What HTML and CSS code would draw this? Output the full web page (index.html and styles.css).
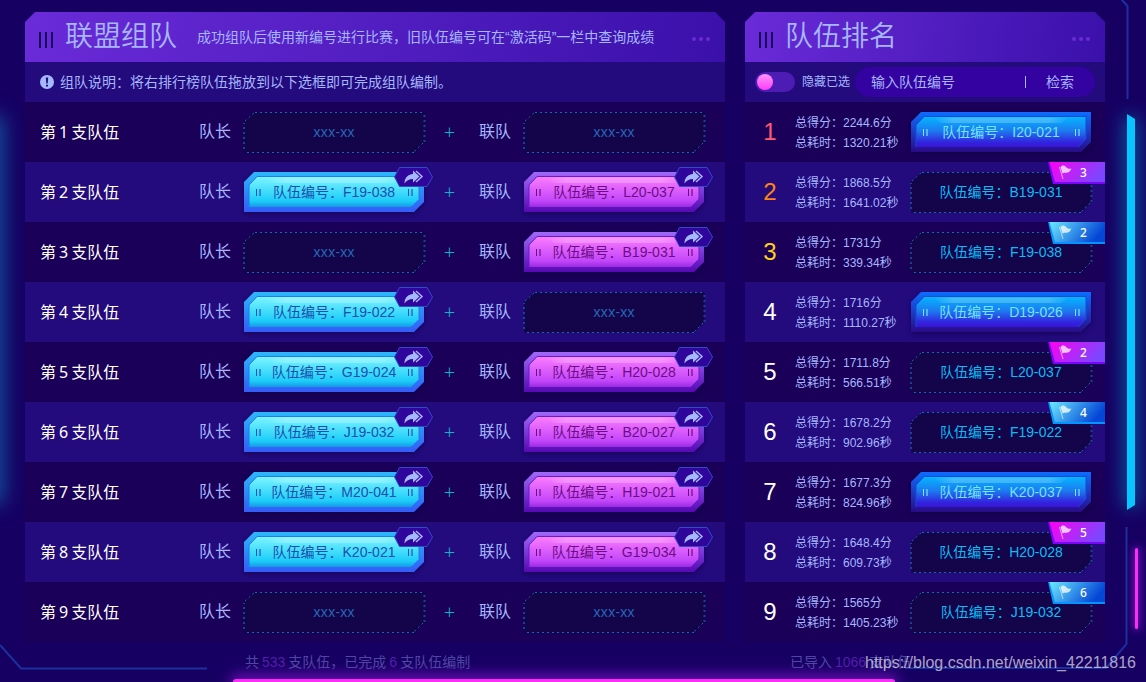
FILE: index.html
```html
<!DOCTYPE html>
<html lang="zh-CN">
<head>
<meta charset="utf-8">
<title>联盟组队</title>
<link rel="stylesheet" href="styles.css">
</head>
<body>
<svg class="defs" aria-hidden="true">
  <defs>
    <linearGradient id="cyanEdge" x1="0" y1="0" x2="0" y2="1"><stop offset="0" stop-color="#2cb8fb"/><stop offset="1" stop-color="#335bf8"/></linearGradient>
    <linearGradient id="cyanFace" x1="0" y1="0" x2="0" y2="1"><stop offset="0" stop-color="#7bf4ff"/><stop offset=".8" stop-color="#1ccdf8"/><stop offset="1" stop-color="#1797e6"/></linearGradient>
    <linearGradient id="pinkEdge" x1="0" y1="0" x2="0" y2="1"><stop offset="0" stop-color="#a069fa"/><stop offset="1" stop-color="#5608b4"/></linearGradient>
    <linearGradient id="pinkFace" x1="0" y1="0" x2="0" y2="1"><stop offset="0" stop-color="#fb7bfd"/><stop offset=".8" stop-color="#c246fa"/><stop offset="1" stop-color="#9a2ae0"/></linearGradient>
    <linearGradient id="blueEdge" x1="0" y1="0" x2="0" y2="1"><stop offset="0" stop-color="#0d6cff"/><stop offset="1" stop-color="#2a0a88"/></linearGradient>
    <linearGradient id="blueFace" x1="0" y1="0" x2="0" y2="1"><stop offset="0" stop-color="#04b4ff"/><stop offset=".45" stop-color="#1c7cf0"/><stop offset=".85" stop-color="#3322de"/><stop offset="1" stop-color="#3a14d8"/></linearGradient>
    <linearGradient id="shine" x1="0" y1="0" x2="1" y2="0"><stop offset="0" stop-color="#fff" stop-opacity="0"/><stop offset=".15" stop-color="#fff" stop-opacity=".22"/><stop offset=".85" stop-color="#fff" stop-opacity=".22"/><stop offset="1" stop-color="#fff" stop-opacity="0"/></linearGradient>
    <linearGradient id="badgePink" x1="0" y1="0" x2="1" y2=".3"><stop offset="0" stop-color="#ff00f0"/><stop offset="1" stop-color="#7d45ff"/></linearGradient>
    <linearGradient id="badgeBlue" x1="0" y1="0" x2="1" y2=".3"><stop offset="0" stop-color="#6ceaff"/><stop offset="1" stop-color="#0446d6"/></linearGradient>
  </defs>
  <symbol id="grips" viewBox="0 0 180 40">
    <path d="M12 17h1v7h-1zM164 17h1v7h-1z"/>
    <path d="M15 17h2v7h-2zM167 17h2v7h-2z" opacity=".6"/>
  </symbol>
  <symbol id="slotEmpty" viewBox="0 0 180 40" overflow="visible">
    <path d="M10 .5H180.500V30L170 40.500H0V10z" fill="#14044a"/>
    <path d="M11 .5H180M170 40.500H0" fill="none" stroke="#0b6ea6" stroke-dasharray="2 3"/>
    <path d="M0 37V11M180.500 3V30" fill="none" stroke="#124886" stroke-width="2" stroke-dasharray="2 3"/>
    <path d="M1 9L10 1M179 31L170 40" fill="none" stroke="#0d6fa4" stroke-dasharray="2 3"/>
  </symbol>
  <symbol id="slotCyan" viewBox="0 0 180 40">
    <path d="M10 0H180V30L170 40H0V10z" fill="url(#cyanEdge)"/>
    <path d="M13 5H175V27L167 35H5V13z" fill="url(#cyanFace)"/>
    <path d="M5 35V13L13 4.500H175V27" fill="none" stroke="#1d7fe8"/>
    <path d="M22 5.500H158L150 11H30z" fill="url(#shine)"/>
    <use href="#grips" width="180" height="40" fill="#1a53b4"/>
  </symbol>
  <symbol id="slotPink" viewBox="0 0 180 40">
    <path d="M10 0H180V30L170 40H0V10z" fill="url(#pinkEdge)"/>
    <path d="M13 5H175V27L167 35H5V13z" fill="url(#pinkFace)"/>
    <path d="M5 35V13L13 4.500H175V27L167 35" fill="none" stroke="#6420c8"/>
    <path d="M22 5.500H158L150 11H30z" fill="url(#shine)"/>
    <use href="#grips" width="180" height="40" fill="#6d0c86"/>
  </symbol>
  <symbol id="slotBlue" viewBox="0 0 180 40">
    <path d="M10 0H180V30L170 40H0V10z" fill="url(#blueEdge)"/>
    <path d="M13 5H175V27L167 35H5V13z" fill="url(#blueFace)"/>
    <path d="M5 35V13L13 4.500H175V27L167 35" fill="none" stroke="#0f4ed0"/>
    <path d="M22 5.500H158L150 11H30z" fill="url(#shine)"/>
    <use href="#grips" width="180" height="40" fill="#74e4ff"/>
  </symbol>
  <symbol id="share" viewBox="0 0 39 20">
    <path d="M5.500 .5H33L38.500 10L33 19.500H5.500L.5 10z" fill="#2f059c" stroke="#2f4cc4"/>
    <path d="M10.500 16.500C10.500 11 13.500 7.500 19 7V3.500L25.500 9.500L19 15.500V12C15 12 12.500 13.500 10.500 16.500z" fill="#a5b8ff"/>
    <path d="M22 4L28 9.500L22 15" fill="none" stroke="#a5b8ff" stroke-width="1.500"/>
  </symbol>
  <symbol id="flag" viewBox="0 0 13 14">
    <path d="M.5 2L4 14" stroke="#fff" stroke-opacity=".6" fill="none"/>
    <path d="M1.500 2C4 -.5 6 .5 7.500 2.500C9 4 11 4 12.500 3.500C11.500 5 11 7 8.500 7.500C6.500 8 5 7 3.500 8.500z" fill="#fff" fill-opacity=".75"/>
  </symbol>
  <symbol id="tagPink" viewBox="0 0 57 22">
    <path d="M0 0H57V22H5z" fill="#7a05ff"/><path d="M1.500 0H57V20H7z" fill="url(#badgePink)"/><use href="#flag" x="11" y="3" width="13" height="14"/>
  </symbol>
  <symbol id="tagBlue" viewBox="0 0 57 22">
    <path d="M0 0H57V22H5z" fill="#0494ff"/><path d="M1.500 0H57V20H7z" fill="url(#badgeBlue)"/><use href="#flag" x="11" y="3" width="13" height="14"/>
  </symbol>
</svg>

<div class="glow glow-left"></div>
<div class="glow glow-right"></div>
<div class="bar bar-right"></div>
<div class="bar bar-bottom"></div>
<svg class="frame frame-top" viewBox="0 0 12 100" aria-hidden="true"><path d="M1 -1L7.500 6V99"/></svg>
<svg class="frame frame-right" viewBox="0 0 224 144" aria-hidden="true"><path d="M0 141H201L221.500 117V0"/></svg>
<svg class="frame frame-left" viewBox="0 0 207 26" aria-hidden="true"><path d="M0 1L21 24.500H207"/></svg>

<main class="page">
  <section class="panel">
    <header class="panel-head">
      <span class="ticks"></span>
      <h1>联盟组队</h1>
      <p>成功组队后使用新编号进行比赛，旧队伍编号可在“激活码”一栏中查询成绩</p>
      <span class="dots"><i></i><i></i><i></i></span>
    </header>
    <div class="panel-bar">
      <svg class="info" viewBox="0 0 14 14" aria-hidden="true"><circle cx="7" cy="7" r="7" fill="#a5b8ff"/><path d="M5.800 2.500H8.200L7.700 8.500H6.300zM6 9.800H8V11.500H6z" fill="#230a7d"/></svg>
      <span>组队说明：将右排行榜队伍拖放到以下选框即可完成组队编制。</span>
    </div>
    <ol class="rows teams">
      <li>
        <b class="name">第<i>1</i>支队伍</b>
        <span class="role">队长</span><div class="slot empty"><svg><use href="#slotEmpty"/></svg><span>xxx-xx</span></div>
        <span class="plus">+</span>
        <span class="role">联队</span><div class="slot empty"><svg><use href="#slotEmpty"/></svg><span>xxx-xx</span></div>
      </li>
      <li>
        <b class="name">第<i>2</i>支队伍</b>
        <span class="role">队长</span><div class="slot cyan"><svg><use href="#slotCyan"/></svg><span>队伍编号：F19-038</span><button class="share" type="button" aria-label="移出"><svg><use href="#share"/></svg></button></div>
        <span class="plus">+</span>
        <span class="role">联队</span><div class="slot pink"><svg><use href="#slotPink"/></svg><span>队伍编号：L20-037</span><button class="share" type="button" aria-label="移出"><svg><use href="#share"/></svg></button></div>
      </li>
      <li>
        <b class="name">第<i>3</i>支队伍</b>
        <span class="role">队长</span><div class="slot empty"><svg><use href="#slotEmpty"/></svg><span>xxx-xx</span></div>
        <span class="plus">+</span>
        <span class="role">联队</span><div class="slot pink"><svg><use href="#slotPink"/></svg><span>队伍编号：B19-031</span><button class="share" type="button" aria-label="移出"><svg><use href="#share"/></svg></button></div>
      </li>
      <li>
        <b class="name">第<i>4</i>支队伍</b>
        <span class="role">队长</span><div class="slot cyan"><svg><use href="#slotCyan"/></svg><span>队伍编号：F19-022</span><button class="share" type="button" aria-label="移出"><svg><use href="#share"/></svg></button></div>
        <span class="plus">+</span>
        <span class="role">联队</span><div class="slot empty"><svg><use href="#slotEmpty"/></svg><span>xxx-xx</span></div>
      </li>
      <li>
        <b class="name">第<i>5</i>支队伍</b>
        <span class="role">队长</span><div class="slot cyan"><svg><use href="#slotCyan"/></svg><span>队伍编号：G19-024</span><button class="share" type="button" aria-label="移出"><svg><use href="#share"/></svg></button></div>
        <span class="plus">+</span>
        <span class="role">联队</span><div class="slot pink"><svg><use href="#slotPink"/></svg><span>队伍编号：H20-028</span><button class="share" type="button" aria-label="移出"><svg><use href="#share"/></svg></button></div>
      </li>
      <li>
        <b class="name">第<i>6</i>支队伍</b>
        <span class="role">队长</span><div class="slot cyan"><svg><use href="#slotCyan"/></svg><span>队伍编号：J19-032</span><button class="share" type="button" aria-label="移出"><svg><use href="#share"/></svg></button></div>
        <span class="plus">+</span>
        <span class="role">联队</span><div class="slot pink"><svg><use href="#slotPink"/></svg><span>队伍编号：B20-027</span><button class="share" type="button" aria-label="移出"><svg><use href="#share"/></svg></button></div>
      </li>
      <li>
        <b class="name">第<i>7</i>支队伍</b>
        <span class="role">队长</span><div class="slot cyan"><svg><use href="#slotCyan"/></svg><span>队伍编号：M20-041</span><button class="share" type="button" aria-label="移出"><svg><use href="#share"/></svg></button></div>
        <span class="plus">+</span>
        <span class="role">联队</span><div class="slot pink"><svg><use href="#slotPink"/></svg><span>队伍编号：H19-021</span><button class="share" type="button" aria-label="移出"><svg><use href="#share"/></svg></button></div>
      </li>
      <li>
        <b class="name">第<i>8</i>支队伍</b>
        <span class="role">队长</span><div class="slot cyan"><svg><use href="#slotCyan"/></svg><span>队伍编号：K20-021</span><button class="share" type="button" aria-label="移出"><svg><use href="#share"/></svg></button></div>
        <span class="plus">+</span>
        <span class="role">联队</span><div class="slot pink"><svg><use href="#slotPink"/></svg><span>队伍编号：G19-034</span><button class="share" type="button" aria-label="移出"><svg><use href="#share"/></svg></button></div>
      </li>
      <li>
        <b class="name">第<i>9</i>支队伍</b>
        <span class="role">队长</span><div class="slot empty"><svg><use href="#slotEmpty"/></svg><span>xxx-xx</span></div>
        <span class="plus">+</span>
        <span class="role">联队</span><div class="slot empty"><svg><use href="#slotEmpty"/></svg><span>xxx-xx</span></div>
      </li>
    </ol>
    <footer class="total total-teams">共<em>533</em>支队伍，已完成<em>6</em>支队伍编制</footer>
  </section>

  <section class="panel">
    <header class="panel-head">
      <span class="ticks"></span>
      <h1>队伍排名</h1>
      <span class="dots"><i></i><i></i><i></i></span>
    </header>
    <form class="panel-bar tools">
      <label class="toggle"><input type="checkbox"><span>隐藏已选</span></label>
      <div class="search">
        <input type="text" placeholder="输入队伍编号" aria-label="输入队伍编号">
        <button type="button">检索</button>
      </div>
    </form>
    <ol class="rows ranks">
      <li>
        <b class="rank first">1</b><p>总得分：2244.6分<br>总耗时：1320.21秒</p>
        <div class="slot blue"><svg><use href="#slotBlue"/></svg><span>队伍编号：I20-021</span></div>
      </li>
      <li>
        <b class="rank second">2</b><p>总得分：1868.5分<br>总耗时：1641.02秒</p>
        <div class="slot used"><svg><use href="#slotEmpty"/></svg><span>队伍编号：B19-031</span></div>
        <div class="tag"><svg><use href="#tagPink"/></svg><span>3</span></div>
      </li>
      <li>
        <b class="rank third">3</b><p>总得分：1731分<br>总耗时：339.34秒</p>
        <div class="slot used"><svg><use href="#slotEmpty"/></svg><span>队伍编号：F19-038</span></div>
        <div class="tag"><svg><use href="#tagBlue"/></svg><span>2</span></div>
      </li>
      <li>
        <b class="rank">4</b><p>总得分：1716分<br>总耗时：1110.27秒</p>
        <div class="slot blue"><svg><use href="#slotBlue"/></svg><span>队伍编号：D19-026</span></div>
      </li>
      <li>
        <b class="rank">5</b><p>总得分：1711.8分<br>总耗时：566.51秒</p>
        <div class="slot used"><svg><use href="#slotEmpty"/></svg><span>队伍编号：L20-037</span></div>
        <div class="tag"><svg><use href="#tagPink"/></svg><span>2</span></div>
      </li>
      <li>
        <b class="rank">6</b><p>总得分：1678.2分<br>总耗时：902.96秒</p>
        <div class="slot used"><svg><use href="#slotEmpty"/></svg><span>队伍编号：F19-022</span></div>
        <div class="tag"><svg><use href="#tagBlue"/></svg><span>4</span></div>
      </li>
      <li>
        <b class="rank">7</b><p>总得分：1677.3分<br>总耗时：824.96秒</p>
        <div class="slot blue"><svg><use href="#slotBlue"/></svg><span>队伍编号：K20-037</span></div>
      </li>
      <li>
        <b class="rank">8</b><p>总得分：1648.4分<br>总耗时：609.73秒</p>
        <div class="slot used"><svg><use href="#slotEmpty"/></svg><span>队伍编号：H20-028</span></div>
        <div class="tag"><svg><use href="#tagPink"/></svg><span>5</span></div>
      </li>
      <li>
        <b class="rank">9</b><p>总得分：1565分<br>总耗时：1405.23秒</p>
        <div class="slot used"><svg><use href="#slotEmpty"/></svg><span>队伍编号：J19-032</span></div>
        <div class="tag"><svg><use href="#tagBlue"/></svg><span>6</span></div>
      </li>
    </ol>
    <footer class="total total-ranks">已导入<em>1066</em>支队伍</footer>
  </section>
</main>
<div class="watermark">https://blog.csdn.net/weixin_42211816</div>
</body>
</html>
```
FILE: styles.css
```css
* {
  box-sizing: border-box;
  margin: 0;
  padding: 0;
}

body {
  position: relative;
  min-height: 100vh;
  overflow-x: hidden;
  background: #160062;
  color: #a5b8ff;
  font: 14px/20px "Liberation Sans", "Noto Sans CJK SC", sans-serif;
}

.defs {
  position: absolute;
  width: 0;
  height: 0;
}

input,
button {
  border: 0;
  background: none;
  color: inherit;
  font: inherit;
}

i,
em {
  font-style: normal;
}

/* page edge decoration */
.glow,
.bar,
.frame {
  position: absolute;
}

.glow-left {
  top: 122px;
  left: -18px;
  width: 16px;
  height: 376px;
  box-shadow: 0 0 20px 6px #12509c;
}

.glow-right {
  top: 120px;
  right: 11px;
  width: 8px;
  height: 384px;
  box-shadow: 0 0 18px 3px #0a5ca4;
}

.glow-right::before {
  content: "";
  position: absolute;
  inset: -6px 0;
  background: #05c6ff;
  clip-path: polygon(0 0, 100% 5px, 100% 391px, 0 100%);
}

.bar {
  background: #ff2bf6;
  box-shadow: 0 0 8px 1px #9a18e0;
}

.bar-right {
  top: 548px;
  right: 8px;
  width: 3px;
  height: 81px;
  border-radius: 2px;
}

.bar-bottom {
  bottom: 0;
  left: 20.3%;
  width: 57.8%;
  height: 3px;
  border-radius: 4px 4px 0 0;
  box-shadow: 0 0 14px 3px #8a14d8;
}

.frame {
  fill: none;
  stroke: #1b309c;
  stroke-width: 2;
}

.frame-top {
  top: 0;
  right: 14px;
  width: 12px;
  height: 100px;
}

.frame-right {
  top: 527px;
  right: 17px;
  width: 224px;
  height: 144px;
}

.frame-left {
  top: 644px;
  left: 0;
  width: 207px;
  height: 26px;
}

/* panels */
.page {
  position: relative;
  display: grid;
  grid-template-columns: minmax(0, 35fr) minmax(0, 18fr);
  gap: 20px;
  padding: 12px 41px 0 25px;
}

.panel-head {
  display: flex;
  align-items: center;
  height: 50px;
  padding: 0 15px 0 14px;
  background: linear-gradient(100deg, #6a2bd8, #3a10aa);
  clip-path: polygon(10px 0, calc(100% - 10px) 0, 100% 10px, 100% 100%, 0 100%, 0 10px);
}

.ticks {
  width: 14px;
  height: 16px;
  margin: 6px 12px 0 0;
  background: repeating-linear-gradient(90deg, #1a0060 0 2px, transparent 2px 6px);
}

.panel-head h1 {
  font-size: 28px;
  font-weight: 350;
  line-height: 40px;
}

.panel-head p {
  margin-left: 20px;
}

.dots {
  display: flex;
  gap: 3px;
  margin: 4px 0 0 auto;
}

.dots i {
  width: 4px;
  height: 4px;
  border-radius: 50%;
  background: #6c2bd2;
}

.panel-bar {
  display: flex;
  align-items: center;
  height: 40px;
  padding: 0 15px;
  background: #230a7d;
}

.info {
  width: 14px;
  height: 14px;
  margin-right: 6px;
}

.tools {
  padding: 0 10px;
}

.toggle {
  display: flex;
  align-items: center;
  gap: 7px;
  margin-right: 5px;
  font-size: 12px;
  white-space: nowrap;
}

.toggle input {
  appearance: none;
  width: 40px;
  height: 20px;
  border-radius: 10px;
  background: #4c1cb4;
}

.toggle input::before {
  content: "";
  display: block;
  width: 16px;
  height: 16px;
  margin: 2px;
  border-radius: 50%;
  background: linear-gradient(#ff94fa, #ff3cf8);
}

.toggle input:checked::before {
  margin-left: 22px;
}

.search {
  display: flex;
  flex: 1;
  align-items: center;
  height: 30px;
  min-width: 0;
  border-radius: 15px;
  background: #3402a0;
}

.search input {
  flex: 1;
  min-width: 0;
  height: 30px;
  padding-left: 16px;
}

.search input::placeholder {
  color: inherit;
  opacity: 1;
}

.search button {
  display: flex;
  align-items: center;
  height: 30px;
  padding-right: 21px;
}

.search button::before {
  content: "";
  width: 1px;
  height: 12px;
  margin-right: 20px;
  background: #a5b8ff;
}

.rows {
  list-style: none;
}

.rows li {
  position: relative;
  display: grid;
  align-items: center;
  height: 60px;
  background: #1a0058;
}

.rows li:nth-child(even) {
  background: #230a7d;
}

.teams li {
  grid-template-columns: 1fr 45px 180px 55px 45px 180px;
  padding: 0 21px 0 15px;
  font-size: 16px;
}

.name {
  color: #fff;
  font-family: "Noto Sans", "Noto Sans CJK SC", sans-serif;
  font-weight: 400;
}

.name i {
  margin: 0 3px;
}

.plus {
  justify-self: center;
  margin-right: 4px;
  color: #0cb6c4;
  font-family: "Noto Sans", sans-serif;
  font-size: 20px;
  font-weight: 300;
}

.ranks li {
  grid-template-columns: 50px 1fr 180px;
  padding-right: 14px;
}

.ranks p {
  padding-top: 2px;
  font-size: 12px;
  white-space: nowrap;
}

.rank {
  color: #fff;
  font-size: 24px;
  font-weight: 400;
  text-align: center;
}

.first {
  color: #ff5a6e;
}

.second {
  color: #ff8412;
}

.third {
  color: #ffd21c;
}

/* team slots */
.slot {
  position: relative;
  display: grid;
  place-items: center;
  height: 40px;
  font-size: 14px;
}

.slot > * {
  grid-area: 1 / 1;
}

.slot > svg {
  width: 180px;
  height: 40px;
  overflow: visible;
}

.slot > span {
  z-index: 1;
}

.empty {
  color: #2466b4;
  font-family: "Noto Sans", sans-serif;
}

.cyan {
  color: #1a4fb0;
}

.pink {
  color: #6d0c86;
}

.blue {
  color: #6ee6ff;
}

.used {
  color: #08bdf4;
}

.cyan > svg,
.pink > svg,
.blue > svg {
  filter: drop-shadow(0 2px 2px rgba(10, 0, 60, .5));
}

.share {
  position: absolute;
  z-index: 2;
  top: -5px;
  right: -9px;
  width: 39px;
  height: 20px;
  cursor: pointer;
}

.share svg {
  display: block;
  width: 39px;
  height: 20px;
}

.tag {
  position: absolute;
  z-index: 2;
  top: 0;
  right: 0;
  display: grid;
  width: 57px;
  height: 22px;
  color: #fff;
  font: 12px/22px "Noto Sans", sans-serif;
  font-weight: 500;
}

.tag > * {
  grid-area: 1 / 1;
}

.tag svg {
  width: 57px;
  height: 22px;
}

.tag span {
  z-index: 1;
  padding-left: 32px;
}

.total {
  height: 40px;
  color: #4f46a6;
  line-height: 40px;
}

.total em {
  margin: 0 3px;
  color: #561cae;
}

.total-teams {
  padding-left: 220px;
}

.total-ranks {
  padding-left: 45px;
}

.watermark {
  position: absolute;
  right: 10px;
  bottom: 9px;
  color: rgba(255, 255, 255, .65);
  font-size: 16px;
}
```
